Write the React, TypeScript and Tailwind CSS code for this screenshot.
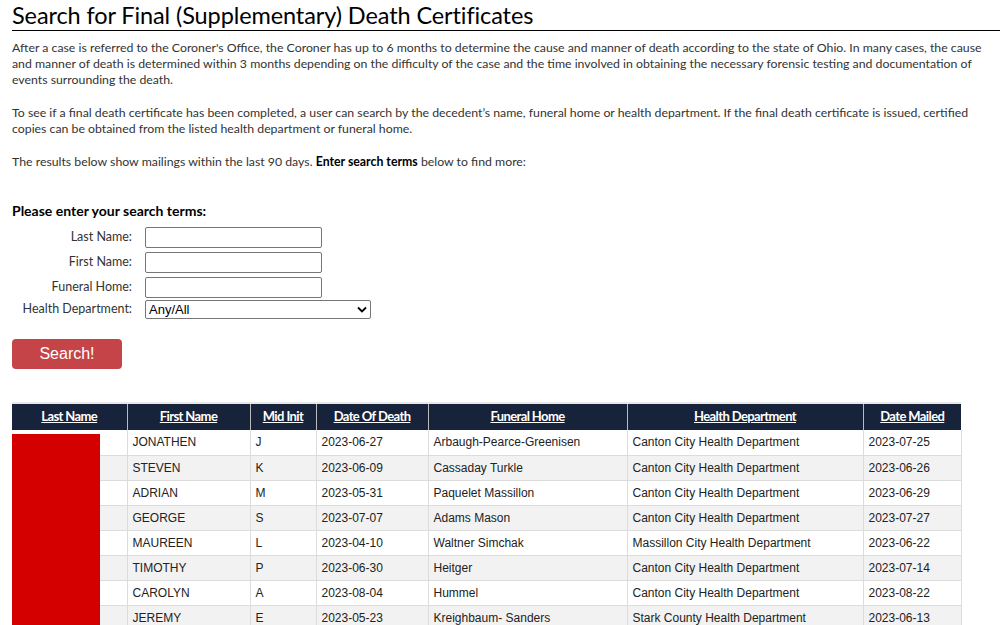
import React from 'react';

const rows = [
  ['JONATHEN', 'J', '2023-06-27', 'Arbaugh-Pearce-Greenisen', 'Canton City Health Department', '2023-07-25'],
  ['STEVEN', 'K', '2023-06-09', 'Cassaday Turkle', 'Canton City Health Department', '2023-06-26'],
  ['ADRIAN', 'M', '2023-05-31', 'Paquelet Massillon', 'Canton City Health Department', '2023-06-29'],
  ['GEORGE', 'S', '2023-07-07', 'Adams Mason', 'Canton City Health Department', '2023-07-27'],
  ['MAUREEN', 'L', '2023-04-10', 'Waltner Simchak', 'Massillon City Health Department', '2023-06-22'],
  ['TIMOTHY', 'P', '2023-06-30', 'Heitger', 'Canton City Health Department', '2023-07-14'],
  ['CAROLYN', 'A', '2023-08-04', 'Hummel', 'Canton City Health Department', '2023-08-22'],
  ['JEREMY', 'E', '2023-05-23', 'Kreighbaum- Sanders', 'Stark County Health Department', '2023-06-13'],
];

const headers = ['Last Name', 'First Name', 'Mid Init', 'Date Of Death', 'Funeral Home', 'Health Department', 'Date Mailed'];
const widths = ['w-[115px]', 'w-[123px]', 'w-[66px]', 'w-[112px]', 'w-[199px]', 'w-[236px]', 'w-[98px]'];

export default function App() {
  return (
    <div className="bg-white min-h-[625px] overflow-hidden text-[#333] font-['Lato',sans-serif]">
      <div className="pl-[12px]">
        <h1 className="text-[23.5px] leading-[28px] pt-[1px] text-black border-b border-black pb-[1px] tracking-[-0.1px]">
          Search for Final (Supplementary) Death Certificates
        </h1>
        <div className="pr-[10px] text-[12.3px] leading-[16px] text-[#333]">
          <p className="mt-[9px]">
            After a case is referred to the Coroner's Office, the Coroner has up to 6 months to determine the cause and manner of death according to the state of Ohio. In many cases, the cause and manner of death is determined within 3 months depending on the difficulty of the case and the time involved in obtaining the necessary forensic testing and documentation of events surrounding the death.
          </p>
          <p className="mt-[17px]">
            To see if a final death certificate has been completed, a user can search by the decedent’s name, funeral home or health department. If the final death certificate is issued, certified copies can be obtained from the listed health department or funeral home.
          </p>
          <p className="mt-[17px]">
            The results below show mailings within the last 90 days. <b className="text-black">Enter search terms</b> below to find more:
          </p>
        </div>

        <h2 className="mt-[32px] text-[14px] leading-[18px] font-bold text-black">Please enter your search terms:</h2>
        <div className="mt-[7px] flex flex-col gap-[4px] text-[12.5px] text-[#333]">
          {['Last Name:', 'First Name:', 'Funeral Home:'].map((l) => (
            <div key={l} className="flex items-center h-[21px]">
              <span className="w-[120px] text-right pr-[0px]">{l}</span>
              <input className="ml-[13px] w-[177px] h-[21px] border border-[#767676] rounded-[2px] bg-white" />
            </div>
          ))}
          <div className="flex items-center h-[19px] -mt-[2px]">
            <span className="w-[120px] text-right">Health Department:</span>
            <div className="ml-[13px] w-[226px] h-[19px] border border-[#767676] rounded-[2px] bg-white flex items-center justify-between px-[3px] font-['Liberation_Sans',sans-serif] text-[13px] text-black">
              <span>Any/All</span>
              <svg width="10" height="7" viewBox="0 0 10 7"><path d="M1 1.5 L5 5.5 L9 1.5" stroke="black" strokeWidth="1.8" fill="none" /></svg>
            </div>
          </div>
        </div>

        <button className="mt-[20px] w-[110px] h-[30px] bg-[#c44448] rounded-[4px] text-white text-[16px] font-['Liberation_Sans',sans-serif]">
          Search!
        </button>

        <table className="mt-[33px] w-[949px] border-collapse table-fixed border-t-[2px] border-t-[#e8e8e8] font-['Liberation_Sans',sans-serif] text-[12px] text-[#222]">
          <thead>
            <tr className="bg-[#17233a] h-[27px]">
              {headers.map((h, i) => (
                <th key={h} className={`${widths[i]} border-r border-[#bbb] last:border-r-0 font-['Lato',sans-serif] font-bold text-[13px] tracking-[-0.6px] text-white underline text-center`}>
                  {h}
                </th>
              ))}
            </tr>
          </thead>
          <tbody>
            {rows.map((r, idx) => (
              <tr key={idx} className={`h-[25px] ${idx % 2 === 1 ? 'bg-[#f2f2f2]' : 'bg-white'}`}>
                <td className="border-b border-r border-[#dcdcdc] p-0 relative">
                  {idx === 0 && <div className="absolute left-0 top-[4px] w-[88px] h-[200px] bg-[#d40000]" />}
                </td>
                {r.map((c, j) => (
                  <td key={j} className="border-b border-r border-[#dcdcdc] px-[5px] whitespace-nowrap overflow-hidden">{c}</td>
                ))}
              </tr>
            ))}
          </tbody>
        </table>
      </div>
    </div>
  );
}
